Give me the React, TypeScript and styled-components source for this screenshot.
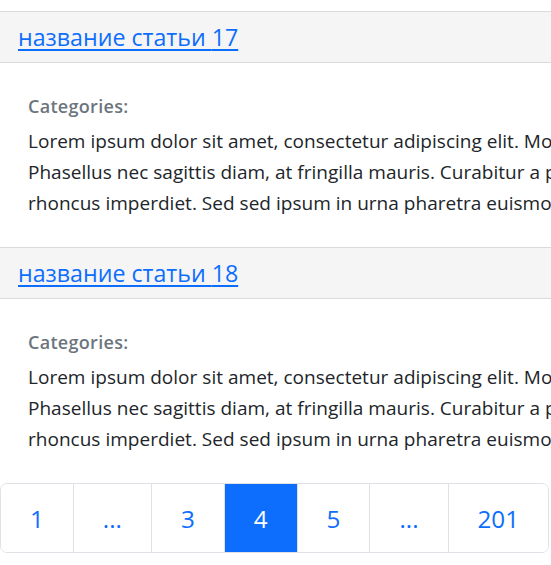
import React from "react";
import styled, { createGlobalStyle } from "styled-components";

const Global = createGlobalStyle`
  html, body { margin: 0; padding: 0; background: #fff; overflow: hidden; }
  body { font-family: "Open Sans", "Noto Sans", sans-serif; color: #212529; }
`;

const Page = styled.div`
  width: 551px;
  padding-top: 11px;
  overflow: hidden;
`;

const Card = styled.article`
  width: 1200px;
  display: flex;
  flex-direction: column;
`;

const CardHeader = styled.header`
  background: #f5f5f5;
  border-top: 1px solid #dadada;
  border-bottom: 1px solid #dadada;
  padding: 10px 18px;
  height: 30px;
  display: flex;
  align-items: center;
`;

const Title = styled.a`
  font-size: 23.2px;
  line-height: 30px;
  color: #0d6efd;
  text-decoration: underline;
  text-underline-offset: 3px;
`;

const CardBody = styled.div`
  padding: 28px;
`;

const Categories = styled.div`
  font-size: 18px;
  letter-spacing: 0.3px;
  line-height: 30px;
  font-weight: 600;
  color: #6c757d;
  margin-bottom: 5px;
`;

const Text = styled.p`
  margin: 0;
  font-size: 19px;
  letter-spacing: 0.02px;
  line-height: 31px;
  white-space: nowrap;
`;

const Pager = styled.nav`
  display: inline-flex;
  border: 1px solid #dee2e6;
  border-radius: 7px;
  overflow: hidden;
`;

const PageItem = styled.a<{ $active?: boolean }>`
  display: flex;
  align-items: center;
  justify-content: center;
  height: 68px;
  padding: 0 29px;
  font-size: 24.2px;
  text-decoration: none;
  color: ${(p) => (p.$active ? "#fff" : "#0d6efd")};
  background: ${(p) => (p.$active ? "#0d6efd" : "#fff")};
  & + & {
    border-left: 1px solid #dee2e6;
  }
`;

const articles = [17, 18];

export default function App() {
  return (
    <>
      <Global />
      <Page>
        {articles.map((n) => (
          <Card key={n}>
            <CardHeader>
              <Title href="#">название статьи {n}</Title>
            </CardHeader>
            <CardBody>
              <Categories>Categories:</Categories>
              <Text>
                Lorem ipsum dolor sit amet, consectetur adipiscing elit. Morbi vitae felis ac est dictum mollis.
                <br />
                Phasellus nec sagittis diam, at fringilla mauris. Curabitur a pulvinar nunc, quis tempus nisl.
                <br />
                rhoncus imperdiet. Sed sed ipsum in urna pharetra euismod. Nam vel lectus tellus.
              </Text>
            </CardBody>
          </Card>
        ))}
        <Pager>
          {["1", "...", "3", "4", "5", "...", "201"].map((t, i) => (
            <PageItem key={i} href="#" $active={t === "4"}>
              {t}
            </PageItem>
          ))}
        </Pager>
      </Page>
    </>
  );
}
